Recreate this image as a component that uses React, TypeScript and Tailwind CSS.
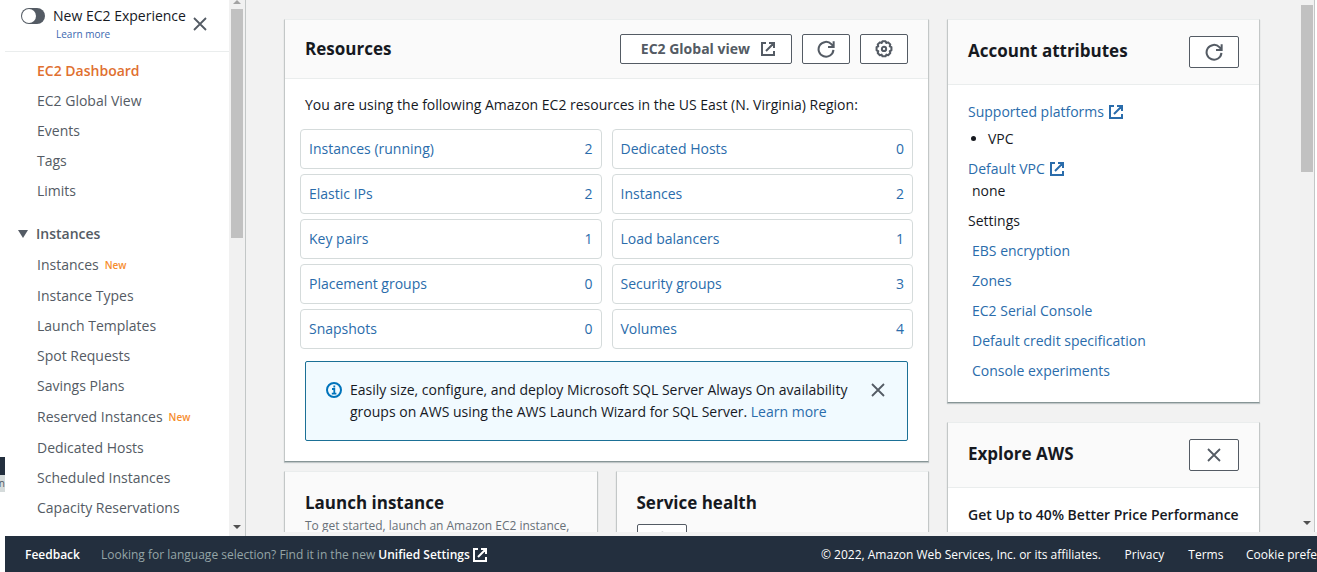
import { useState } from "react";
import type { ReactNode } from "react";

const primaryLinks = ["EC2 Global View", "Events", "Tags", "Limits"];

const instanceLinks = [
  { label: "Instances", isNew: true },
  { label: "Instance Types" },
  { label: "Launch Templates" },
  { label: "Spot Requests" },
  { label: "Savings Plans" },
  { label: "Reserved Instances", isNew: true },
  { label: "Dedicated Hosts" },
  { label: "Scheduled Instances" },
  { label: "Capacity Reservations" },
];

const resources = [
  { label: "Instances (running)", count: 2 },
  { label: "Dedicated Hosts", count: 0 },
  { label: "Elastic IPs", count: 2 },
  { label: "Instances", count: 2 },
  { label: "Key pairs", count: 1 },
  { label: "Load balancers", count: 1 },
  { label: "Placement groups", count: 0 },
  { label: "Security groups", count: 3 },
  { label: "Snapshots", count: 0 },
  { label: "Volumes", count: 4 },
];

const settings = [
  "EBS encryption",
  "Zones",
  "EC2 Serial Console",
  "Default credit specification",
  "Console experiments",
];

function Icon({ children, size = "size-4" }: { children: ReactNode; size?: string }) {
  return (
    <svg
      viewBox="0 0 16 16"
      fill="none"
      stroke="currentColor"
      strokeWidth="2"
      aria-hidden="true"
      className={`${size} shrink-0`}
    >
      {children}
    </svg>
  );
}

function ExternalIcon() {
  return (
    <Icon>
      <path d="M6 2H2v12h12v-4M9 2h5v5M14 2 6 10" />
    </Icon>
  );
}

function RefreshIcon() {
  return (
    <Icon size="size-[18px]">
      <path d="M14.6 8.8A6.6 6.6 0 1 1 12.8 3.7L14.6 5.4M14.8 1v5.2H9.8" strokeWidth="1.8" />
    </Icon>
  );
}

function GearIcon() {
  return (
    <Icon size="size-[18px]">
      <path
        d="M6.6 1.2h2.8l.7 1.4 1.6-.5 1.9 1.9-.5 1.6 1.5.8v2.8l-1.5.8.5 1.6-1.9 1.9-1.6-.5-.7 1.5H6.6l-.7-1.5-1.6.5-1.9-1.9.5-1.6-1.5-.8V6.4l1.5-.8-.5-1.6 1.9-1.9 1.6.5z"
        strokeWidth="1.8"
        strokeLinejoin="round"
      />
      <circle cx="8" cy="7.9" r="1.9" strokeWidth="1.8" />
    </Icon>
  );
}

function CloseIcon() {
  return (
    <Icon>
      <path d="m2 2 12 12M14 2 2 14" strokeWidth="1.8" />
    </Icon>
  );
}

function InfoIcon() {
  return (
    <Icon>
      <circle cx="8" cy="8" r="7" />
      <path d="M8.3 3.4v2M6 7h2.3v4.2M5.8 11.6h4.6" strokeWidth="1.8" />
    </Icon>
  );
}

function Card({ children }: { children: ReactNode }) {
  return (
    <section className="border border-x-[#c3c7c7] border-t-[#eaeded] border-b-[#879596] bg-white shadow-[0_1px_1px_rgba(0,28,36,0.2)]">
      {children}
    </section>
  );
}

function Arrow({ up }: { up?: boolean }) {
  return (
    <svg viewBox="0 0 8 4" aria-hidden="true" className={up ? "h-1 w-2 text-[#a3a3a3]" : "h-1 w-2 text-[#505050]"}>
      <path d={up ? "M0 4 4 0l4 4z" : "M0 0h8L4 4z"} fill="currentColor" />
    </svg>
  );
}

function NavLink({ label, isNew }: { label: string; isNew?: boolean }) {
  return (
    <li>
      <a href="#" className={isNew ? "flex h-8 items-center gap-1.5" : "flex h-[30px] items-center"}>
        {label}
        {isNew && <span className="text-[10px] font-semibold text-[#f68d2e]">New</span>}
      </a>
    </li>
  );
}

function Sidebar() {
  const [enabled, setEnabled] = useState(false);
  return (
    <aside className="flex w-[241px] shrink-0 border-r border-[#c3c7c7] bg-white text-[#545b64]">
      <div className="min-w-0 flex-1 overflow-hidden">
        <div className="flex h-[52px] items-start border-b border-[#eaeded] pl-4">
          <label className="mt-2 flex cursor-pointer">
            <input
              type="checkbox"
              checked={enabled}
              onChange={(e) => setEnabled(e.target.checked)}
              aria-label="New EC2 Experience"
              className="peer sr-only"
            />
            <span className="flex h-4 w-6 rounded-full bg-[#545b64] p-px peer-checked:justify-end">
              <span className="size-3.5 rounded-full bg-white" />
            </span>
          </label>
          <div className="ml-2 flex flex-1 flex-col pt-1.5">
            <span className="text-sm/5 whitespace-nowrap text-[#16191f]">New EC2 Experience</span>
            <a href="#" className="pl-[3px] text-[10px]/4 text-[#3b68b0]">
              Learn more
            </a>
          </div>
          <button type="button" aria-label="Close panel" className="mt-4 mr-[21px]">
            <CloseIcon />
          </button>
        </div>
        <nav aria-label="EC2" className="pt-1 text-sm">
          <ul className="pl-8">
            <li>
              <a href="#" className="flex h-[30px] items-center font-semibold text-[#e07030]">
                EC2 Dashboard
              </a>
            </li>
            {primaryLinks.map((label) => (
              <NavLink key={label} label={label} />
            ))}
          </ul>
          <button type="button" className="mt-3 flex h-[31px] items-center gap-2 pl-[13px] font-semibold">
            <svg viewBox="0 0 10 8" aria-hidden="true" className="h-2 w-2.5">
              <path d="M0 0h10L5 8z" fill="currentColor" />
            </svg>
            Instances
          </button>
          <ul className="pl-8">
            {instanceLinks.map((item) => (
              <NavLink key={item.label} label={item.label} isNew={item.isNew} />
            ))}
          </ul>
        </nav>
      </div>
      <div aria-hidden="true" className="flex w-4 flex-col items-center bg-[#f1f1f1] pb-[7px]">
        <Arrow up />
        <div className="mt-[5px] h-[229px] w-3 bg-[#c1c1c1]" />
        <div className="flex-1" />
        <Arrow />
      </div>
    </aside>
  );
}

const buttonBase =
  "flex items-center justify-center rounded-xs border border-[#545b64] bg-white text-[#545b64]";

function ResourcesCard() {
  const [showTip, setShowTip] = useState(true);
  return (
    <Card>
      <header className="flex items-center justify-between border-b border-[#eaeded] bg-[#fafafa] px-5 py-3.5">
        <h2 className="text-[17px]/6 font-bold">Resources</h2>
        <div className="flex gap-2.5">
          <button type="button" className={`${buttonBase} h-[30px] gap-2.5 pr-[15px] pl-5 text-sm font-bold`}>
            EC2 Global view
            <ExternalIcon />
          </button>
          <button type="button" aria-label="Refresh resources" className={`${buttonBase} h-[30px] w-12`}>
            <RefreshIcon />
          </button>
          <button type="button" aria-label="Resource settings" className={`${buttonBase} h-[30px] w-12`}>
            <GearIcon />
          </button>
        </div>
      </header>
      <div className="px-[15px] pt-[15px] pb-5">
        <p className="mb-[13px] px-[5px] text-sm/[22px]">
          You are using the following Amazon EC2 resources in the US East (N. Virginia) Region:
        </p>
        <div className="grid grid-cols-2 gap-x-2.5 gap-y-[5px]">
          {resources.map((item) => (
            <a
              key={item.label}
              href="#"
              className="flex h-10 items-center justify-between rounded-sm border border-[#d5dbdb] px-2 text-sm text-[#2a6cab]"
            >
              <span>{item.label}</span>
              <span>{item.count}</span>
            </a>
          ))}
        </div>
        {showTip && (
          <div className="mx-[5px] mt-3 flex h-20 items-start rounded-xs border border-[#1b7096] bg-[#f1faff] pt-[17px] pr-[21px] pl-5">
            <span className="mt-[3px] mr-2 text-[#0073bb]">
              <InfoIcon />
            </span>
            <p className="flex-1 text-sm/[22px]">
              Easily size, configure, and deploy Microsoft SQL Server Always On availability
              <br />
              groups on AWS using the AWS Launch Wizard for SQL Server.{" "}
              <a href="#" className="text-[#2a6cab]">
                Learn more
              </a>
            </p>
            <button type="button" aria-label="Dismiss" onClick={() => setShowTip(false)} className="mt-[3px] text-[#545b64]">
              <CloseIcon />
            </button>
          </div>
        )}
      </div>
    </Card>
  );
}

function AccountCard() {
  return (
    <Card>
      <header className="flex items-start justify-between border-b border-[#eaeded] bg-[#fafafa] px-5 py-4">
        <h2 className="pt-[3px] text-[17px]/6 font-bold">Account attributes</h2>
        <button type="button" aria-label="Refresh account attributes" className={`${buttonBase} h-8 w-[50px]`}>
          <RefreshIcon />
        </button>
      </header>
      <div className="px-5 pt-4 pb-4 text-sm/[22px]">
        <a href="#" className="flex items-center gap-1 text-[#2a6cab]">
          Supported platforms
          <ExternalIcon />
        </a>
        <ul className="my-1 list-disc py-0.5 pl-5 leading-5">
          <li>VPC</li>
        </ul>
        <a href="#" className="mt-[7px] flex items-center gap-1 text-[#2a6cab]">
          Default VPC
          <ExternalIcon />
        </a>
        <p className="pl-1">none</p>
        <h3 className="mt-2">Settings</h3>
        <ul className="pt-1 pl-1">
          {settings.map((label) => (
            <li key={label}>
              <a href="#" className="flex h-[30px] items-center text-[#2a6cab]">
                {label}
              </a>
            </li>
          ))}
        </ul>
      </div>
    </Card>
  );
}

function ExploreCard() {
  return (
    <Card>
      <header className="flex items-start justify-between border-b border-[#eaeded] bg-[#fafafa] px-5 py-4">
        <h2 className="pt-[3px] text-[17px]/6 font-bold">Explore AWS</h2>
        <button type="button" aria-label="Close Explore AWS" className={`${buttonBase} h-8 w-[50px]`}>
          <CloseIcon />
        </button>
      </header>
      <h3 className="px-5 py-4 text-sm/[22px] font-semibold whitespace-nowrap">
        Get Up to 40% Better Price Performance
      </h3>
    </Card>
  );
}

function Main() {
  return (
    <div className="flex min-w-0 flex-1 pb-1">
      <main className="flex min-w-0 flex-1 items-start gap-[18px] overflow-hidden pt-[19px] pr-10 pl-[38px]">
        <div className="flex min-w-0 flex-1 flex-col gap-[9px]">
          <ResourcesCard />
          <div className="grid grid-cols-2 gap-[18px]">
            <Card>
              <div className="h-40 bg-[#fafafa] px-5 pt-[19px]">
                <h2 className="text-[17px]/6 font-bold">Launch instance</h2>
                <p className="text-xs/[22px] text-[#687078]">To get started, launch an Amazon EC2 instance,</p>
              </div>
            </Card>
            <Card>
              <div className="h-40 bg-[#fafafa] px-5 pt-[19px]">
                <h2 className="text-[17px]/6 font-bold">Service health</h2>
                <button type="button" aria-label="Refresh service health" className={`${buttonBase} mt-[9px] h-8 w-[50px]`}>
                  <RefreshIcon />
                </button>
              </div>
            </Card>
          </div>
        </div>
        <div className="flex w-[313px] shrink-0 flex-col gap-[19px]">
          <AccountCard />
          <ExploreCard />
        </div>
      </main>
      <div
        aria-hidden="true"
        className="flex w-[15px] flex-col items-center border-r border-[#c3c7c7] bg-[#f1f1f1] pt-[5px] pb-[7px]"
      >
        <div className="h-[167px] w-3 bg-[#c1c1c1]" />
        <div className="flex-1" />
        <Arrow />
      </div>
      <div className="w-0.5 bg-white" />
    </div>
  );
}

function Footer() {
  return (
    <footer className="flex h-9 shrink-0 items-center overflow-hidden bg-[#232f3e] pt-px pl-5 text-xs whitespace-nowrap text-white">
      <a href="#" className="font-semibold">
        Feedback
      </a>
      <p className="ml-[21px] text-[#95a5a6]">Looking for language selection? Find it in the new</p>
      <a href="#" className="ml-[3px] flex items-center gap-0.5 font-semibold">
        Unified Settings
        <ExternalIcon />
      </a>
      <div className="ml-auto flex w-[496px] shrink-0 font-medium">
        <span className="w-[305px]">© 2022, Amazon Web Services, Inc. or its affiliates.</span>
        <a href="#" className="w-16">
          Privacy
        </a>
        <a href="#" className="w-[58px]">
          Terms
        </a>
        <a href="#">Cookie prefe</a>
      </div>
    </footer>
  );
}

export default function App() {
  return (
    <div className="flex h-screen overflow-hidden bg-white font-['Open_Sans','Noto_Sans',sans-serif] text-[#16191f]">
      <div aria-hidden="true" className="flex w-[5px] shrink-0 flex-col justify-end overflow-hidden pb-20">
        <div className="h-[18px] bg-[#232f3e]" />
        <div className="flex h-[17px] justify-end bg-[#d5dbdb] text-[10px]/[17px] text-[#545b64]">n</div>
      </div>
      <div className="flex min-w-0 flex-1 flex-col">
        <div className="flex min-h-0 flex-1 bg-[#f2f2f2]">
          <Sidebar />
          <Main />
        </div>
        <Footer />
      </div>
    </div>
  );
}
